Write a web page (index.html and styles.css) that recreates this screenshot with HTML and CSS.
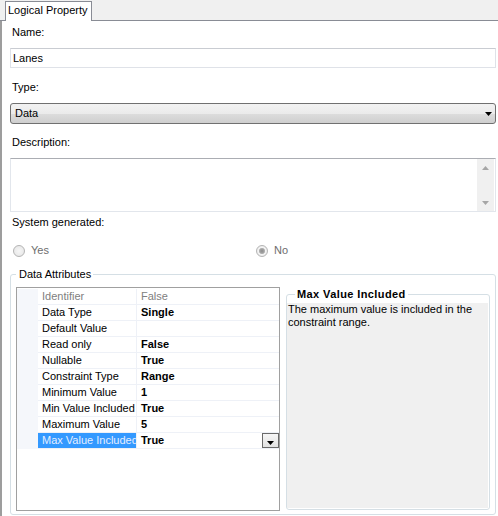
FILE: index.html
```html
<!DOCTYPE html>
<html>
<head>
<meta charset="utf-8">
<link rel="stylesheet" href="styles.css">
</head>
<body>
<div class="tabstrip"><div class="tab">Logical Property</div></div>
<div class="panel">
  <div class="label l-name">Name:</div>
  <div class="textbox">Lanes</div>
  <div class="label l-type">Type:</div>
  <div class="combo"><span>Data</span><svg class="arrow" width="7" height="4" viewBox="0 0 7 4"><path d="M0 0H7L3.5 4Z" fill="#000"/></svg></div>
  <div class="label l-desc">Description:</div>
  <div class="memo">
    <div class="memo-text"></div>
    <div class="vscroll">
      <div class="sbtn"><svg width="7" height="4" viewBox="0 0 7 4"><path d="M0 4H7L3.5 0Z" fill="#a6a6a6"/></svg></div>
      <div class="sbtn"><svg width="7" height="4" viewBox="0 0 7 4"><path d="M0 0H7L3.5 4Z" fill="#a6a6a6"/></svg></div>
    </div>
  </div>
  <div class="label l-sys">System generated:</div>
  <div class="radios">
    <div class="radio"><span class="rb"></span><span>Yes</span></div>
    <div class="radio"><span class="rb checked"></span><span>No</span></div>
  </div>
  <fieldset class="group">
    <legend>Data Attributes</legend>
    <div class="group-body">
      <div class="propgrid">
        <div class="row dim"><div class="gutter"></div><div class="name">Identifier</div><div class="value">False</div></div>
        <div class="row"><div class="gutter"></div><div class="name">Data Type</div><div class="value">Single</div></div>
        <div class="row"><div class="gutter"></div><div class="name">Default Value</div><div class="value"></div></div>
        <div class="row"><div class="gutter"></div><div class="name">Read only</div><div class="value">False</div></div>
        <div class="row"><div class="gutter"></div><div class="name">Nullable</div><div class="value">True</div></div>
        <div class="row"><div class="gutter"></div><div class="name">Constraint Type</div><div class="value">Range</div></div>
        <div class="row"><div class="gutter"></div><div class="name">Minimum Value</div><div class="value">1</div></div>
        <div class="row"><div class="gutter"></div><div class="name">Min Value Included</div><div class="value">True</div></div>
        <div class="row"><div class="gutter"></div><div class="name">Maximum Value</div><div class="value">5</div></div>
        <div class="row sel"><div class="gutter"></div><div class="name">Max Value Included</div><div class="value"><span>True</span><span class="dd"><svg width="7" height="4" viewBox="0 0 7 4"><path d="M0 0H7L3.5 4Z" fill="#000"/></svg></span></div></div>
      </div>
      <fieldset class="help">
        <legend>Max Value Included</legend>
        <div class="help-text">The maximum value is included in the constraint range.</div>
      </fieldset>
    </div>
  </fieldset>
</div>
</body>
</html>
```
FILE: styles.css
```css
* { box-sizing: border-box; }
html, body { margin: 0; padding: 0; }
body {
  font: 11px/13px "Liberation Sans", Arial, sans-serif;
  color: #000;
  background: #fff;
  width: 498px;
  height: 516px;
  overflow: hidden;
}

.tabstrip {
  height: 21px;
  background: #f0f0f0;
  border-bottom: 1px solid #898c95;
  display: flex;
  align-items: flex-end;
  padding-left: 5px;
}
.tab {
  width: 87px;
  height: 20px;
  margin-bottom: -1px;
  background: #fff;
  border: 1px solid #898c95;
  border-bottom: none;
  padding: 2px 0 0 2px;
  white-space: nowrap;
}

.panel {
  border-left: 2px solid #9d9d9d;
  padding: 0 2px 0 8px;
  height: 495px;
  display: flex;
  flex-direction: column;
}

.label { padding-left: 2px; }
.l-name { margin-top: 5px; }
.l-type { margin-top: 13px; }
.l-desc { margin-top: 12px; }
.l-sys { margin-top: 4px; }

.textbox {
  margin-top: 9px;
  height: 20px;
  border: 1px solid #dfe2e8;
  border-top-color: #c9ccd2;
  padding-left: 2px;
  line-height: 18px;
}

.combo {
  margin-top: 9px;
  height: 21px;
  border: 1px solid #707070;
  border-radius: 3px;
  background: linear-gradient(#f2f2f2 0%, #ebebeb 50%, #dddddd 50%, #cfcfcf 100%);
  padding: 0 3px 0 4px;
  display: flex;
  align-items: center;
  justify-content: space-between;
}
.combo .arrow { display: block; margin-top: 1px; }

.memo {
  margin-top: 9px;
  height: 54px;
  border: 1px solid #e2e6ec;
  border-top-color: #abadb3;
  display: flex;
}
.memo-text { flex: 1; }
.vscroll {
  width: 17px;
  margin-right: 1px;
  background: #f0f0f0;
  display: flex;
  flex-direction: column;
  justify-content: space-between;
}
.sbtn {
  height: 17px;
  display: flex;
  align-items: center;
  justify-content: center;
}
.sbtn svg { display: block; }

.radios {
  margin-top: 15px;
  display: grid;
  grid-template-columns: 243px 1fr;
  padding-left: 3px;
  color: #6d6d6d;
}
.radio {
  display: flex;
  align-items: center;
  gap: 6px;
  height: 13px;
}
.rb {
  width: 12px;
  height: 12px;
  border-radius: 50%;
  border: 1px solid #b4b4b4;
  background: radial-gradient(circle, #f6f6f6 0, #e4e4e4 100%);
}
.rb.checked {
  background: radial-gradient(circle, #8c8c8c 0, #a4a4a4 2.2px, #b8b8b8 2.8px, #f4f4f4 3.4px, #e4e4e4 100%);
}

.group {
  margin: 11px 0 0;
  padding: 6px 5px 3px 5px;
  border: 1px solid #d5dfe5;
  border-radius: 3px;
  min-width: 0;
}
.group > legend {
  padding: 0 2px 0 3px;
}
.group-body {
  display: flex;
  gap: 6px;
  height: 224px;
}

.propgrid {
  width: 264px;
  flex: none;
  border: 1px solid #a0a0a0;
  padding-top: 1px;
  background: #fff;
}
.row {
  display: flex;
  height: 16px;
  line-height: 15px;
}
.gutter {
  width: 21px;
  flex: none;
  background: #f5f7fb;
}
.name {
  width: 99px;
  flex: none;
  padding-left: 4px;
  border-right: 1px solid #eef1f7;
  border-bottom: 1px solid #eef1f7;
  white-space: nowrap;
  overflow: hidden;
}
.value {
  flex: 1;
  padding-left: 4px;
  border-bottom: 1px solid #eef1f7;
  font-weight: bold;
  display: flex;
  white-space: nowrap;
}
.row.dim .name, .row.dim .value {
  color: #808080;
  font-weight: normal;
}
.row.sel .name {
  background: #3399ff;
  color: #e4eeff;
}
.dd {
  margin-left: auto;
  width: 17px;
  height: 15px;
  border: 1px solid #6a6a6a;
  background: linear-gradient(#f6f6f6, #e2e2e2);
  display: flex;
  justify-content: center;
  align-items: flex-start;
  padding-top: 7px;
}
.dd svg { display: block; }

.help {
  width: 204px;
  flex: none;
  margin: 1px 0;
  padding: 2px 1px 1px 0;
  border: 1px solid #d5dfe5;
  border-radius: 3px;
  min-width: 0;
  display: flex;
  flex-direction: column;
}
.help > legend {
  margin-left: 8px;
  padding: 0 2px;
  font-weight: bold;
  letter-spacing: 0.4px;
}
.help-text {
  flex: 1;
  background: #f0f0f0;
  padding: 0 2px 0 1px;
}
```
